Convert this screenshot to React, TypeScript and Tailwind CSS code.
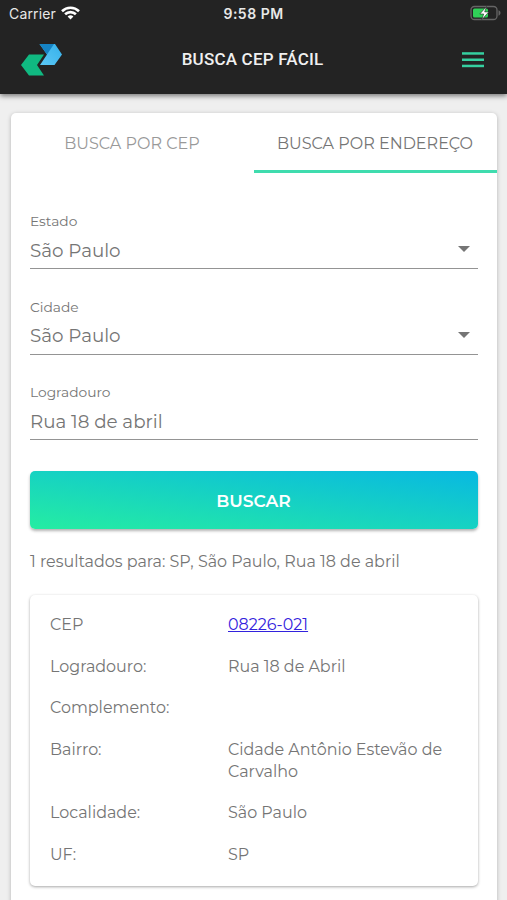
import React from "react";

function StatusBar() {
  return (
    <div className="grid h-[27px] grid-cols-3 items-center px-[9px] text-[14px] leading-[27px] text-[#e8e8e8]">
      <div className="flex items-center gap-[5px]">
        <span className="tracking-[0.15px]">Carrier</span>
        <svg className="-mt-[1px] h-[14px] w-[19px]" viewBox="0 0 19 14" fill="none" stroke="#fff" strokeWidth="2.6">
          <path d="M1 5.2a12.2 12.2 0 0 1 17 0" />
          <path d="M4.1 8.3a7.7 7.7 0 0 1 10.8 0" />
          <path d="M9.5 13.6 6.6 10.6a4.1 4.1 0 0 1 5.8 0z" fill="#fff" stroke="none" />
        </svg>
      </div>
      <span className="text-center font-semibold tracking-[0.5px]">9:58 PM</span>
      <div className="-mr-[3px] flex items-center justify-end">
        <svg className="-mt-[1px] h-[16px] w-[31px]" viewBox="0 0 31 16">
          <rect x="1" y="1.5" width="26" height="13" rx="3.5" fill="none" stroke="#656565" strokeWidth="1.3" />
          <path d="M28.5 5.3v5.4c1.4-.5 2-1.5 2-2.7s-.6-2.2-2-2.7z" fill="#656565" />
          <rect x="3" y="3.5" width="15" height="9" rx="1.5" fill="#30d158" />
          <path d="M16.5 1.5 9.8 9h3.900l-1.900 5.700 7-7.800h-4.100z" fill="#fff" stroke="#232323" strokeWidth=".6" />
        </svg>
      </div>
    </div>
  );
}

function Logo() {
  return (
    <svg className="h-[32px] w-[42px]" viewBox="0 0 42 32">
      <defs>
        <linearGradient id="sky" x1="0" y1="1" x2="1" y2="0">
          <stop offset="0" stopColor="#5cc8f5" />
          <stop offset="1" stopColor="#35b0ea" />
        </linearGradient>
      </defs>
      <path d="M18.500 0H34l7 10.500L33.500 21H19l7-10.500z" fill="url(#sky)" />
      <path d="M18.500 0H33L26 10.500z" fill="#1583c4" />
      <path d="M8 10.500h15L16 21l7 10.500H8L0 21z" fill="#10b981" />
    </svg>
  );
}

function Field({ label, value, select }: { label: string; value: string; select?: boolean }) {
  return (
    <div className="h-[85.5px]">
      <div className="h-[18px] pl-[0.5px] text-[13.8px] leading-[18px]">{label}</div>
      <div className="flex h-[39px] items-center justify-between border-b border-[#949494] pt-[3px] pr-[8px] pl-[0.5px] text-[18.3px]">
        <span>{value}</span>
        {select && <span className="mb-[3px] border-x-[6px] border-t-[6px] border-x-transparent border-t-[#757575]" />}
      </div>
    </div>
  );
}

const rows: [string, string][] = [
  ["CEP", "08226-021"],
  ["Logradouro:", "Rua 18 de Abril"],
  ["Complemento:", ""],
  ["Bairro:", "Cidade Antônio Estevão de Carvalho"],
  ["Localidade:", "São Paulo"],
  ["UF:", "SP"],
];

export default function App() {
  return (
    <div className="h-[900px] w-[507px] overflow-hidden bg-[#efefef] font-['Montserrat','Inter',sans-serif] text-[#757575]">
      <header className="relative h-[94px] bg-[#232323] font-['Inter',sans-serif] shadow-[0_2px_5px_rgba(0,0,0,0.5)]">
        <StatusBar />
        <div className="grid h-[65px] grid-cols-3 items-center px-[21px]">
          <Logo />
          <h1 className="-ml-[2px] text-center font-['Roboto',sans-serif] text-[17px] font-medium tracking-[0.2px] whitespace-nowrap text-[#f0f0f0]">
            BUSCA CEP FÁCIL
          </h1>
          <div className="flex justify-end pr-[2px]">
            <svg className="h-[16px] w-[22px]" viewBox="0 0 22 16" fill="#35cfa0">
              <rect y="0.200" width="22" height="2.500" />
              <rect y="6.500" width="22" height="2.500" />
              <rect y="12.700" width="22" height="2.500" />
            </svg>
          </div>
        </div>
      </header>

      <main className="mx-auto mt-[19px] h-[820px] w-[486px] rounded-[5px] bg-white shadow-[0_1px_4px_rgba(0,0,0,0.25)]">
        <nav className="grid h-[60px] grid-cols-2 text-center text-[16px] leading-[61px]">
          <span className="text-[#999]">BUSCA POR CEP</span>
          <span className="h-[60px] border-b-[3px] border-[#3fdcae] whitespace-nowrap">BUSCA POR ENDEREÇO</span>
        </nav>
        <div className="px-[19px] pt-[39px]">
          <Field label="Estado" value="São Paulo" select />
          <Field label="Cidade" value="São Paulo" select />
          <Field label="Logradouro" value="Rua 18 de abril" />
          <button className="mt-[2px] block h-[58px] w-full rounded-[5px] bg-[linear-gradient(to_top_right,#25eda2,#08b8e2)] pt-[2px] text-[17.1px] font-semibold text-white shadow-[0_2px_3px_rgba(0,0,0,0.3)]">
            BUSCAR
          </button>
          <p className="mt-[22px] pl-[0.5px] text-[15.95px] leading-[22px] whitespace-nowrap">1 resultados para: SP, São Paulo, Rua 18 de abril</p>
          <dl className="mt-[22px] flex h-[291px] flex-col gap-[19.5px] rounded-[5px] pt-[19.5px] pr-[20px] pl-[20.5px] text-[15.93px] leading-[22px] shadow-[0_1px_3px_rgba(0,0,0,0.35)]">
            {rows.map(([k, v]) => (
              <div key={k} className="grid min-h-[22px] grid-cols-[178px_1fr]">
                <dt>{k}</dt>
                <dd>{k === "CEP" ? <a className="text-[#3222dd] underline">{v}</a> : v}</dd>
              </div>
            ))}
          </dl>
        </div>
      </main>
    </div>
  );
}
